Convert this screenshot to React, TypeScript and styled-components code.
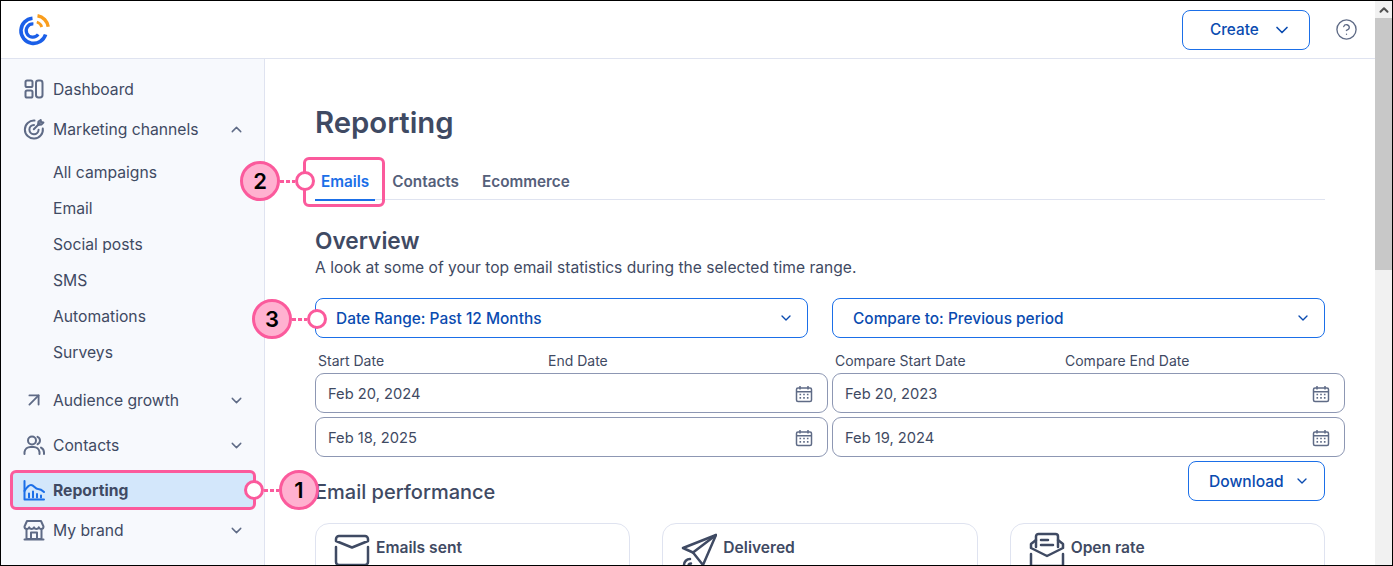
import React from "react";
import styled, { createGlobalStyle } from "styled-components";
import { ChevronDown, ChevronUp, ArrowUpRight, CircleHelp } from "lucide-react";

const GlobalStyle = createGlobalStyle`
  html, body {
    margin: 0;
    padding: 0;
    background: #fff;
  }
  * {
    box-sizing: border-box;
  }
`;

const INK = "#3f4a63";
const LINK = "#0a4bb0";
const BLUE = "#1b6fe8";
const PINK = "#fb5a9c";

/* page shell */
const Frame = styled.div`
  position: relative;
  display: flex;
  width: 1393px;
  height: 566px;
  overflow: hidden;
  border: 1px solid #000;
  font-family: Inter, "Noto Sans", sans-serif;
  color: ${INK};
`;

const Viewport = styled.div`
  display: flex;
  flex-direction: column;
  flex: 1;
  min-width: 0;
`;

const TopBar = styled.header`
  display: flex;
  align-items: center;
  flex: none;
  height: 58px;
  padding: 0 17px;
  border-bottom: 1px solid #dfe3f0;
`;

const LogoMark = styled.svg`
  width: 32px;
  height: 32px;
  margin-right: auto;
`;

const CreateButton = styled.button`
  display: flex;
  align-items: center;
  justify-content: space-between;
  width: 128px;
  height: 40px;
  padding: 0 17px 0 27px;
  border: 1px solid ${BLUE};
  border-radius: 8px;
  background: #fff;
  color: ${LINK};
  font: 500 15.3px Inter, sans-serif;
`;

const HelpIcon = styled(CircleHelp)`
  margin: 0 0 0 25px;
  color: #5f6b86;
`;

const Body = styled.div`
  display: flex;
  flex: 1;
  min-height: 0;
`;

/* sidebar */
const Sidebar = styled.nav`
  flex: none;
  width: 264px;
  padding: 10px 0 0 9px;
  background: #f7f9fd;
  border-right: 1px solid #dfe3f0;
`;

const NavRow = styled.div<{ $gap?: number; $active?: boolean }>`
  display: flex;
  align-items: center;
  width: 246px;
  height: 40px;
  margin-top: ${(p) => p.$gap ?? 0}px;
  padding: 0 11px 0 13px;
  border-radius: 6px;
  border: ${(p) => (p.$active ? `3px solid ${PINK}` : "none")};
  background: ${(p) => (p.$active ? "#d3e7fb" : "transparent")};
  font-size: 15.7px;
  font-weight: ${(p) => (p.$active ? 700 : 400)};

  ${(p) => p.$active && "padding: 0 8px 0 10px;"}
`;

const NavIcon = styled.svg<{ $accent?: boolean }>`
  flex: none;
  width: 22px;
  height: 22px;
  margin-right: 8px;
  fill: none;
  stroke: ${(p) => (p.$accent ? BLUE : "#5f6b86")};
  stroke-width: 2;
  stroke-linecap: round;
  stroke-linejoin: round;
`;

const NavLabel = styled.span`
  flex: 1;
`;

const SubList = styled.ul`
  list-style: none;
  margin: 5px 0 0;
  padding: 0 0 0 43px;
`;

const SubItem = styled.li`
  display: flex;
  align-items: center;
  height: 36px;
  font-size: 15.7px;
`;

const Caret = styled.span`
  display: flex;
  color: #5f6b86;
`;

/* main column */
const Main = styled.main`
  flex: 1;
  min-width: 0;
  padding: 45px 50px 0 50px;
  overflow: hidden;
`;

const PageTitle = styled.h1`
  height: 36px;
  margin: 0;
  padding-top: 1px;
  font-size: 29.3px;
  line-height: 36px;
  font-weight: 600;
`;

const Tabs = styled.div`
  display: flex;
  height: 36px;
  margin-top: 24px;
  border-bottom: 1px solid #dfe3f0;
`;

const Tab = styled.div<{ $active?: boolean }>`
  position: relative;
  display: flex;
  align-items: center;
  height: 37px;
  padding: 0 6px;
  margin-right: 11px;
  font-size: 15.3px;
  font-weight: 600;
  color: ${(p) => (p.$active ? BLUE : "#55607a")};
  border-bottom: 2px solid ${(p) => (p.$active ? BLUE : "transparent")};
`;

const TabHighlight = styled.span`
  position: absolute;
  inset: -7px -10px -8px -12px;
  border: 3px solid ${PINK};
  border-radius: 6px;
`;

const SectionTitle = styled.h2`
  margin: 27px 0 0;
  font-size: 22.7px;
  line-height: 28px;
  font-weight: 600;
`;

const Description = styled.p`
  margin: 3px 0 0;
  font-size: 15.6px;
  line-height: 20px;
`;

const SelectRow = styled.div`
  display: grid;
  grid-template-columns: 1fr 1fr;
  gap: 24px;
  margin-top: 20px;
`;

const Select = styled.div`
  display: flex;
  align-items: center;
  justify-content: space-between;
  height: 40px;
  padding: 0 13px 0 20px;
  border: 1px solid ${BLUE};
  border-radius: 8px;
  color: ${LINK};
  font-size: 15.45px;
  font-weight: 500;
`;

const DateGrid = styled.div`
  display: grid;
  grid-template-columns: 513px 513px;
  column-gap: 4px;
  width: 1030px;
  margin-top: 13px;
`;

const LabelRow = styled.div`
  display: flex;
  height: 22px;
  padding-left: 3px;
  font-size: 14px;
  line-height: 20px;
`;

const DateLabel = styled.span`
  width: 230px;
`;

const FieldStack = styled.div`
  display: flex;
  flex-direction: column;
  gap: 4px;
`;

const DateField = styled.div`
  display: flex;
  align-items: center;
  justify-content: space-between;
  height: 40px;
  padding: 1px 14px 0 12px;
  border: 1px solid #8d97b3;
  border-radius: 9px;
  font-size: 14.7px;
`;

const CalendarIcon = styled.svg`
  width: 18px;
  height: 18px;
  fill: none;
  stroke: #5f6b86;
  stroke-width: 1.5;
`;

const PerformanceHeader = styled.div`
  display: flex;
  align-items: flex-start;
  justify-content: space-between;
  height: 62px;
  margin-top: 4px;
`;

const PerformanceTitle = styled.h3`
  margin: 17px 0 0;
  font-size: 20px;
  line-height: 28px;
  font-weight: 500;
`;

const DownloadButton = styled.button`
  display: flex;
  align-items: center;
  justify-content: space-between;
  width: 137px;
  height: 40px;
  padding: 0 14px 0 20px;
  border: 1px solid ${BLUE};
  border-radius: 8px;
  background: #fff;
  color: ${LINK};
  font: 500 15.6px Inter, sans-serif;
`;

const CardGrid = styled.div`
  display: grid;
  grid-template-columns: repeat(3, 1fr);
  gap: 32px;
`;

const Card = styled.div`
  display: flex;
  align-items: flex-start;
  gap: 6px;
  height: 120px;
  padding: 8px 18px;
  border: 1px solid #dfe3f0;
  border-radius: 14px;
  font-size: 15.6px;
  font-weight: 600;
`;

const CardTitle = styled.span`
  margin-top: 6px;
`;

const CardIcon = styled.svg`
  flex: none;
  width: 36px;
  height: 36px;
  fill: none;
  stroke: ${INK};
  stroke-width: 2.5;
  stroke-linecap: round;
  stroke-linejoin: round;
`;

/* scrollbar */
const Scrollbar = styled.div`
  flex: none;
  display: flex;
  flex-direction: column;
  width: 17px;
  background: #f1f1f1;
`;

const ScrollArrow = styled.div`
  display: flex;
  align-items: center;
  justify-content: center;
  height: 17px;
  color: #505050;
`;

const ScrollThumb = styled.div`
  height: 252px;
  background: #c8c8c8;
`;

/* numbered callouts laid over the page */
const Callout = styled.div<{ $x: number; $y: number }>`
  position: absolute;
  left: ${(p) => p.$x}px;
  top: ${(p) => p.$y}px;
  display: flex;
  align-items: center;
`;

const Badge = styled.span`
  display: flex;
  align-items: center;
  justify-content: center;
  width: 40px;
  height: 40px;
  border: 3px solid ${PINK};
  border-radius: 50%;
  background: #ffb1d0;
  color: #000;
  font-size: 22px;
  font-weight: 600;
`;

const Dots = styled.span`
  width: 15px;
  height: 3px;
  background: repeating-linear-gradient(90deg, ${PINK} 0 4px, transparent 4px 6px);
`;

const Anchor = styled.span`
  width: 20px;
  height: 20px;
  border: 3px solid ${PINK};
  border-radius: 50%;
  background: #fff;
`;

const Logo = () => (
  <LogoMark viewBox="0 0 32 32" fill="none" strokeLinecap="butt">
    <path d="M27.6 20.5A12.6 12.6 0 1 1 14.5 4.2" stroke="#1b5fe8" strokeWidth="3.6" />
    <path d="M19.5 1.8A12.9 12.9 0 0 1 30.2 12.8" stroke="#f99d1c" strokeWidth="3.4" />
    <path d="M20.2 20.4A6.6 6.6 0 1 1 15.4 10" stroke="#1b5fe8" strokeWidth="3.2" />
    <path d="M18.8 8A7.5 7.5 0 0 1 23.8 13" stroke="#f99d1c" strokeWidth="2.8" />
  </LogoMark>
);

const DashboardIcon = () => (
  <NavIcon viewBox="0 0 22 22">
    <rect x="2.5" y="2.5" width="7" height="6.5" rx="1.6" />
    <rect x="2.5" y="12.5" width="7" height="7" rx="1.6" />
    <rect x="13" y="2.5" width="6.5" height="17" rx="2.4" />
  </NavIcon>
);

const TargetIcon = () => (
  <NavIcon viewBox="0 0 22 22">
    <path d="M11.5 2.6A9 9 0 1 0 19.8 10.5" />
    <path d="M11 7A4.6 4.6 0 1 0 15.6 11.8" />
    <path d="M10.8 11.2 17 5" />
    <path d="M15.5 3.5 15 6.9l3.4-.4 2-2-2.3-.4-.4-2.1z" />
  </NavIcon>
);

const GrowthIcon = () => <NavIcon as={ArrowUpRight} />;

const ContactsIcon = () => (
  <NavIcon viewBox="0 0 22 22">
    <circle cx="9" cy="6.5" r="4" />
    <path d="M1.5 20v-2a6 6 0 0 1 6-5h3a6 6 0 0 1 6 5v2" />
    <path d="M14.5 2.8a4 4 0 0 1 0 7.4" />
    <path d="M18 13.6a5.5 5.5 0 0 1 3 4.9V20" />
  </NavIcon>
);

const ReportingIcon = () => (
  <NavIcon viewBox="0 0 22 22" $accent>
    <path d="M1.5 2v18.5h19.5" />
    <path d="M1.5 12C4 8 6 6 8 6c3 0 4 4 7 4 2 0 4 1 6 3" />
    <path d="M6 18.5v-4M10 18.5v-6M14 18.5v-3.5M18 18.5v-2" />
  </NavIcon>
);

const BrandIcon = () => (
  <NavIcon viewBox="0 0 22 22">
    <path d="M4 2h14l2.5 5.5a2.4 2.4 0 0 1-4.7.8 2.6 2.6 0 0 1-4.8 0 2.6 2.6 0 0 1-4.8 0 2.4 2.4 0 0 1-4.7-.8z" />
    <path d="M3.5 10.5V20h15v-9.5" />
    <path d="M8 20v-6.5h6V20" />
    <path d="M1.5 20.5h19" />
  </NavIcon>
);

const Calendar = () => (
  <CalendarIcon viewBox="0 0 18 18">
    <rect x="1.5" y="3" width="15" height="13.5" rx="1.5" />
    <path d="M1.5 6.8h15M5 1v3.5M13 1v3.5" />
    <path
      d="M4.5 9.5h1.6M8.2 9.5h1.6M11.9 9.5h1.6M4.5 12.8h1.6M8.2 12.8h1.6M11.9 12.8h1.6"
      strokeWidth="1.7"
    />
  </CalendarIcon>
);

const SentIcon = () => (
  <CardIcon viewBox="0 0 36 36">
    <path d="M2 7a3 3 0 0 1 3-3h26a3 3 0 0 1 3 3v2L18 15.5 2 9z" />
    <path d="M2 15v15a3 3 0 0 0 3 3h26a3 3 0 0 0 3-3V15" />
  </CardIcon>
);

const DeliveredIcon = () => (
  <CardIcon viewBox="0 0 36 36">
    <path d="M35 3 2 16l10 4.5L22 33z" />
    <path d="M35 3 12 20.5" />
    <path d="M3 33a6 6 0 0 1 6-6M7.5 34a2.5 2.5 0 0 1 2.5-2.5" />
  </CardIcon>
);

const OpenRateIcon = () => (
  <CardIcon viewBox="0 0 36 36">
    <path d="M7 15V4.5A2.5 2.5 0 0 1 9.5 2h17A2.5 2.5 0 0 1 29 4.5V15" />
    <path d="M12 8h7M12 13h12" />
    <path d="M7 8 2 12v4l16 8 16-8v-4l-5-4" />
    <path d="M2 22v12h32V22" />
  </CardIcon>
);

const subItems = ["All campaigns", "Email", "Social posts", "SMS", "Automations", "Surveys"];

export default function App() {
  return (
    <>
      <GlobalStyle />
      <Frame>
        <Viewport>
          <TopBar>
            <Logo />
            <CreateButton>
              Create
              <ChevronDown size={20} />
            </CreateButton>
            <HelpIcon size={23} strokeWidth={1.4} />
          </TopBar>
          <Body>
            <Sidebar>
              <NavRow>
                <DashboardIcon />
                <NavLabel>Dashboard</NavLabel>
              </NavRow>
              <NavRow>
                <TargetIcon />
                <NavLabel>Marketing channels</NavLabel>
                <Caret>
                  <ChevronUp size={17} />
                </Caret>
              </NavRow>
              <SubList>
                {subItems.map((item) => (
                  <SubItem key={item}>{item}</SubItem>
                ))}
              </SubList>
              <NavRow $gap={10}>
                <GrowthIcon />
                <NavLabel>Audience growth</NavLabel>
                <Caret>
                  <ChevronDown size={17} />
                </Caret>
              </NavRow>
              <NavRow $gap={5}>
                <ContactsIcon />
                <NavLabel>Contacts</NavLabel>
                <Caret>
                  <ChevronDown size={17} />
                </Caret>
              </NavRow>
              <NavRow $gap={5} $active>
                <ReportingIcon />
                <NavLabel>Reporting</NavLabel>
              </NavRow>
              <NavRow>
                <BrandIcon />
                <NavLabel>My brand</NavLabel>
                <Caret>
                  <ChevronDown size={17} />
                </Caret>
              </NavRow>
            </Sidebar>
            <Main>
              <PageTitle>Reporting</PageTitle>
              <Tabs>
                <Tab $active>
                  Emails
                  <TabHighlight />
                </Tab>
                <Tab>Contacts</Tab>
                <Tab>Ecommerce</Tab>
              </Tabs>
              <SectionTitle>Overview</SectionTitle>
              <Description>
                A look at some of your top email statistics during the selected time range.
              </Description>
              <SelectRow>
                <Select>
                  Date Range: Past 12 Months
                  <ChevronDown size={16} />
                </Select>
                <Select>
                  Compare to: Previous period
                  <ChevronDown size={16} />
                </Select>
              </SelectRow>
              <DateGrid>
                <LabelRow>
                  <DateLabel>Start Date</DateLabel>
                  <DateLabel>End Date</DateLabel>
                </LabelRow>
                <LabelRow>
                  <DateLabel>Compare Start Date</DateLabel>
                  <DateLabel>Compare End Date</DateLabel>
                </LabelRow>
                <FieldStack>
                  <DateField>
                    Feb 20, 2024
                    <Calendar />
                  </DateField>
                  <DateField>
                    Feb 18, 2025
                    <Calendar />
                  </DateField>
                </FieldStack>
                <FieldStack>
                  <DateField>
                    Feb 20, 2023
                    <Calendar />
                  </DateField>
                  <DateField>
                    Feb 19, 2024
                    <Calendar />
                  </DateField>
                </FieldStack>
              </DateGrid>
              <PerformanceHeader>
                <PerformanceTitle>Email performance</PerformanceTitle>
                <DownloadButton>
                  Download
                  <ChevronDown size={16} />
                </DownloadButton>
              </PerformanceHeader>
              <CardGrid>
                <Card>
                  <SentIcon />
                  <CardTitle>Emails sent</CardTitle>
                </Card>
                <Card>
                  <DeliveredIcon />
                  <CardTitle>Delivered</CardTitle>
                </Card>
                <Card>
                  <OpenRateIcon />
                  <CardTitle>Open rate</CardTitle>
                </Card>
              </CardGrid>
            </Main>
          </Body>
        </Viewport>
        <Scrollbar>
          <ScrollArrow>
            <ChevronUp size={14} strokeWidth={3.5} />
          </ScrollArrow>
          <ScrollThumb />
        </Scrollbar>
        <Callout $x={243} $y={469}>
          <Anchor />
          <Dots />
          <Badge>1</Badge>
        </Callout>
        <Callout $x={239} $y={160}>
          <Badge>2</Badge>
          <Dots />
          <Anchor />
        </Callout>
        <Callout $x={251} $y={298}>
          <Badge>3</Badge>
          <Dots />
          <Anchor />
        </Callout>
      </Frame>
    </>
  );
}
